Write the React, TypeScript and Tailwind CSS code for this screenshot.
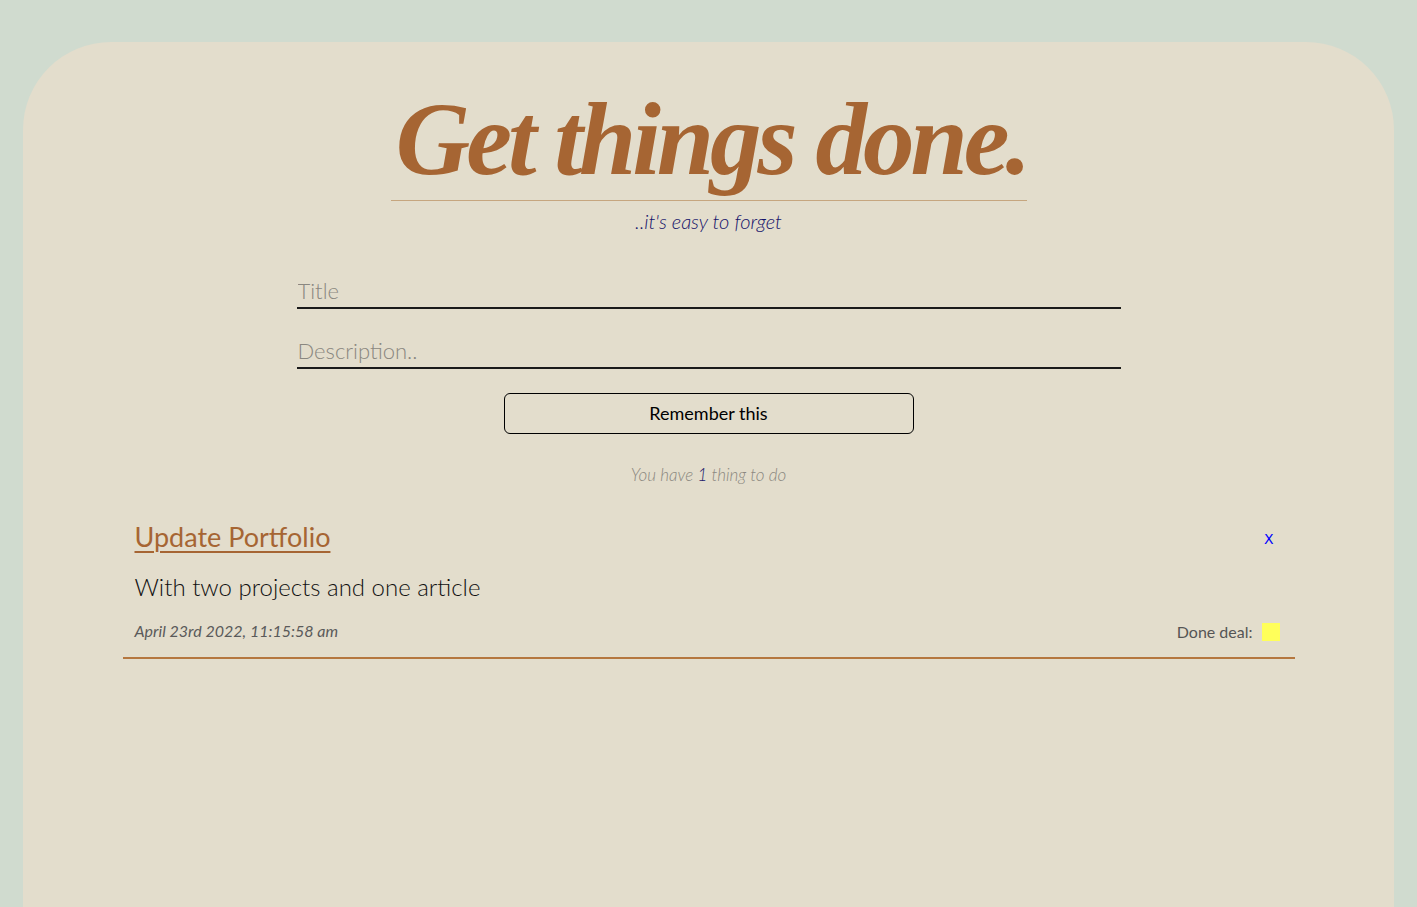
import React from "react";

export default function App() {
  return (
    <div className="min-h-[907px] bg-[#d0dbcf] pt-[42px] px-[23px] overflow-hidden" style={{ fontFamily: "Lato, 'Noto Sans', sans-serif" }}>
      <div className="bg-[#e3ddcc] rounded-t-[88px] min-h-[865px] flex flex-col items-center">
        <div className="mt-[43px] w-[636px] border-b border-[#c6a67f] flex justify-center">
          <h1 className="whitespace-nowrap text-[#a66533] font-bold italic text-[103px] leading-[108px] tracking-[-4px] pb-[7px] ml-[6px]" style={{ fontFamily: "'Liberation Serif', serif" }}>
            Get things done.
          </h1>
        </div>
        <p className="mt-[6px] text-[#14126a] italic font-light text-[20px] leading-[28px]">..it's easy to forget</p>

        <div className="mt-[38px] w-[824px] flex flex-col">
          <input
            placeholder="Title"
            className="h-[36px] bg-transparent border-b-2 border-[#1a1a1a] text-[22px] font-light placeholder-[#8a8780] outline-none px-[1px]"
          />
          <input
            autoFocus
            placeholder="Description.."
            className="mt-[24px] h-[36px] bg-transparent border-b-2 border-[#1a1a1a] text-[22px] font-light placeholder-[#8a8780] outline-none px-[1px] caret-black"
          />
        </div>

        <button className="mt-[24px] w-[410px] h-[41px] border-[1.5px] border-black rounded-[6px] text-[18px] text-black">
          Remember this
        </button>

        <p className="mt-[28px] text-[17px] italic font-light text-[#8b8880]">
          You have <span className="text-[#1c1a6b]">1</span> thing to do
        </p>

        <div className="mt-[31px] w-[1172px] border-b-2 border-[#b5773f] px-[12px] pb-[13px]">
          <div className="flex items-center justify-between">
            <a href="#" className="text-[#a66533] text-[27px] underline underline-offset-[4px] decoration-[2px] leading-[36px]">Update Portfolio</a>
            <button className="text-[#0000ff] text-[14px] mr-[9px] mt-[6px]" style={{ fontFamily: "'DejaVu Sans', sans-serif" }}>X</button>
          </div>
          <p className="mt-[16px] text-[24px] text-[#111] leading-[32px] font-light">With two projects and one article</p>
          <div className="mt-[15px] flex items-center justify-between">
            <span className="italic text-[16px] text-[#5a5a5a]">April 23rd 2022, 11:15:58 am</span>
            <span className="flex items-center gap-[9px] text-[16px] text-[#555] mr-[3px] mt-[2px]">
              Done deal:
              <span className="inline-block w-[18px] h-[18px] bg-[#ffff5a]"></span>
            </span>
          </div>
        </div>
      </div>
    </div>
  );
}
